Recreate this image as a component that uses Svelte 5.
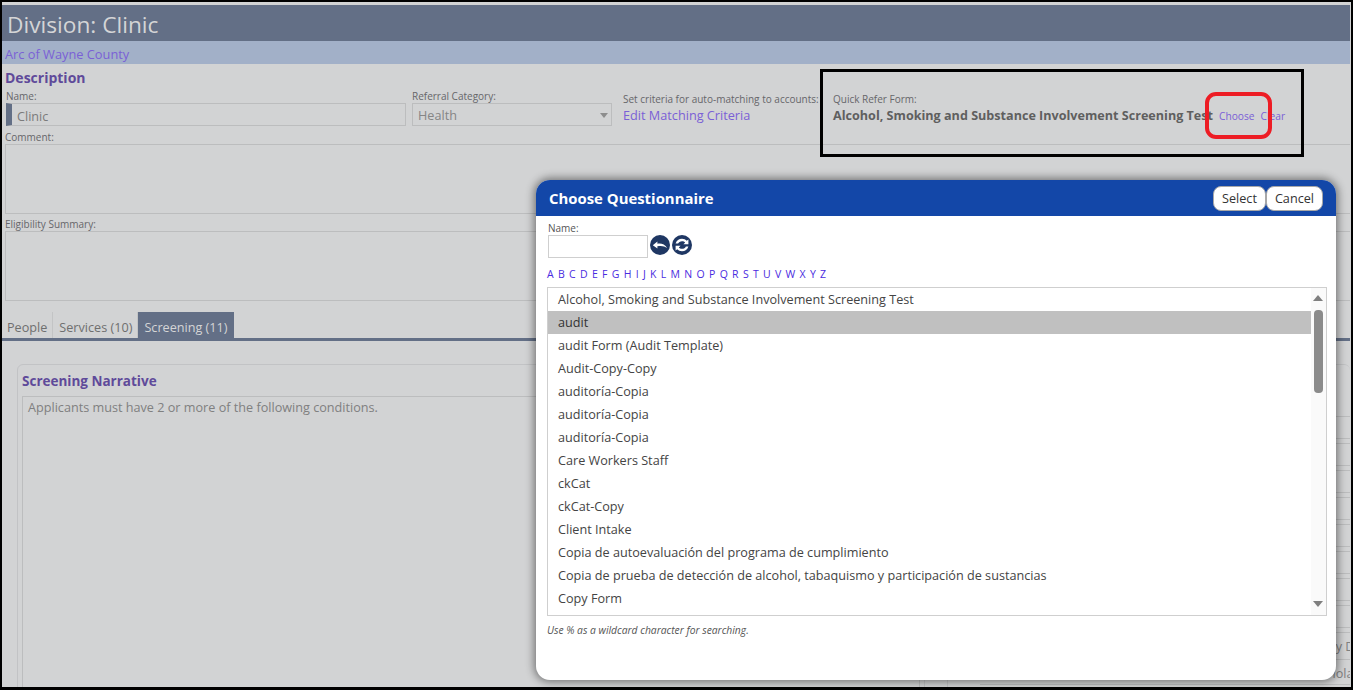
<script lang="ts">
  const letters = 'ABCDEFGHIJKLMNOPQRSTUVWXYZ'.split('');
  const forms = [
    'Alcohol, Smoking and Substance Involvement Screening Test',
    'audit',
    'audit Form (Audit Template)',
    'Audit-Copy-Copy',
    'auditoría-Copia',
    'auditoría-Copia',
    'auditoría-Copia',
    'Care Workers Staff',
    'ckCat',
    'ckCat-Copy',
    'Client Intake',
    'Copia de autoevaluación del programa de cumplimiento',
    'Copia de prueba de detección de alcohol, tabaquismo y participación de sustancias',
    'Copy Form'
  ];
  let selected = $state(1);
  const sideRows = [0, 1, 2, 3, 4, 5, 6, 7];
</script>

<div class="page">
  <header class="title">Division: Clinic</header>
  <div class="subbar"><a href="#top">Arc of Wayne County</a></div>

  <section class="description">
    <h2>Description</h2>
    <div class="top-row">
      <div class="field name">
        <label for="name">Name:</label>
        <div class="required"><input id="name" value="Clinic" /></div>
      </div>
      <div class="field category">
        <label for="cat">Referral Category:</label>
        <div class="select" id="cat">Health<span class="caret"></span></div>
      </div>
      <div class="field criteria">
        <span class="lab">Set criteria for auto-matching to accounts:</span>
        <a href="#top">Edit Matching Criteria</a>
      </div>
      <div class="field quick">
        <span class="lab">Quick Refer Form:</span>
        <div class="quick-line">
          <strong>Alcohol, Smoking and Substance Involvement Screening Test</strong>
          <a href="#top">Choose</a>
          <a href="#top">Clear</a>
        </div>
      </div>
    </div>
    <div class="lab comment-label">Comment:</div>
    <div class="area"></div>
    <div class="lab elig-label">Eligibility Summary:</div>
    <div class="area"></div>
  </section>

  <nav class="tabs">
    <span class="tab">People</span>
    <span class="tab">Services (10)</span>
    <span class="tab active">Screening (11)</span>
  </nav>

  <div class="panels">
    <section class="card narrative">
      <h3>Screening Narrative</h3>
      <div class="narrative-text">Applicants must have 2 or more of the following conditions.</div>
    </section>
    <section class="card side">
      {#each sideRows as r}
        <div class="side-row"></div>
      {/each}
      <div class="side-text one">Family Dependency</div>
      <div class="side-text two">Violation</div>
    </section>
  </div>
</div>

<div class="modal" role="dialog" aria-label="Choose Questionnaire">
  <div class="modal-head">
    <h4>Choose Questionnaire</h4>
    <div class="actions">
      <button>Select</button>
      <button>Cancel</button>
    </div>
  </div>
  <div class="modal-body">
    <label class="search-label" for="search">Name:</label>
    <div class="search">
      <input id="search" />
      <svg class="icon" viewBox="0 0 20 20" aria-label="Undo">
        <circle cx="10" cy="10" r="10" fill="#1f3763" />
        <path d="M2.8 10.2 7.4 6.4v2.3c3.8-.6 7.4.3 9.8 4.4-2.6-2-5.8-2.6-9.8-1.8v2.3z" fill="#fff" />
      </svg>
      <svg class="icon" viewBox="0 0 20 20" aria-label="Refresh">
        <circle cx="10" cy="10" r="10" fill="#1f3763" />
        <path d="M3.6 8.6C4.4 5.6 7 3.8 10 3.8c1.9 0 3.6.8 4.8 2l1.6-1.4v4.8h-5l1.8-1.7c-.7-.8-1.9-1.3-3.2-1.3-1.8 0-3.3 1-3.9 2.4zM16.4 11.4c-.8 3-3.4 4.8-6.4 4.8-1.9 0-3.6-.8-4.8-2l-1.6 1.4v-4.8h5l-1.8 1.7c.7.8 1.9 1.3 3.2 1.3 1.8 0 3.3-1 3.9-2.4z" fill="#fff" />
      </svg>
    </div>
    <div class="alpha">
      {#each letters as l}
        <a href="#top">{l}</a>
      {/each}
    </div>
    <div class="list">
      <div class="items">
        {#each forms as f, i}
          <button class="item" class:sel={i === selected} onclick={() => (selected = i)}>{f}</button>
        {/each}
      </div>
      <div class="scroll">
        <span class="arrow up"></span>
        <span class="thumb"></span>
        <span class="arrow down"></span>
      </div>
    </div>
    <p class="hint">Use % as a wildcard character for searching.</p>
  </div>
</div>

<!-- annotations drawn on top of the screenshot -->
<div class="mark-black"></div>
<div class="mark-red"></div>
<div class="frame"></div>

<style>
  :global(html), :global(body) {
    margin: 0;
    height: 100%;
    overflow: hidden;
    background: #d2d3d4;
  }

  :global(#app) {
    font-family: "Open Sans", "Noto Sans", sans-serif;
    font-size: 12px;
    color: #6b6b6b;
  }

  .page {
    box-sizing: border-box;
    height: 690px;
    padding: 5px 3px 0 2px;
    background: #d2d3d4;
    overflow: hidden;
  }

  a {
    color: #7a60d6;
    text-decoration: none;
  }

  .title {
    height: 36px;
    line-height: 40px;
    padding-left: 5px;
    background: #636f86;
    color: #d4d5d6;
    font-size: 22.7px;
  }

  .subbar {
    height: 23px;
    line-height: 27px;
    padding-left: 3px;
    background: #a2b0c8;
    font-size: 12.8px;
  }

  .description {
    padding: 0 0 0 3px;
  }

  h2 {
    margin: 0;
    height: 26px;
    line-height: 28px;
    color: #5f4a9a;
    font-size: 14px;
    font-weight: 700;
  }

  .top-row {
    display: flex;
    height: 41px;
  }

  .field {
    display: flex;
    flex-direction: column;
  }

  label, .lab {
    font-size: 10px;
    line-height: 13px;
    color: #66666a;
  }

  .name {
    width: 400px;
    margin-left: 1px;
  }

  .required {
    border: 1px solid #bcbdbe;
    border-left: 6px solid #636f86;
    height: 21px;
  }

  .required input {
    width: 100%;
    box-sizing: border-box;
    height: 21px;
    border: 0;
    padding: 2px 0 0 5px;
    background: transparent;
    font: inherit;
    font-size: 12.65px;
    color: #7b7b7b;
    outline: none;
  }

  .category {
    width: 200px;
    margin-left: 6px;
  }

  .select {
    position: relative;
    box-sizing: border-box;
    height: 23px;
    line-height: 23px;
    padding-left: 5px;
    border: 1px solid #bcbdbe;
    font-size: 12.65px;
    color: #858585;
  }

  .caret {
    position: absolute;
    right: 3px;
    top: 9px;
    border: 4px solid transparent;
    border-top: 5px solid #8d8d8d;
    border-bottom: 0;
  }

  .criteria {
    width: 198px;
    margin-left: 11px;
    padding-top: 3px;
    white-space: nowrap;
  }

  .criteria a {
    font-size: 12.7px;
    line-height: 18px;
  }

  .quick {
    margin-left: 12px;
    padding-top: 3px;
    white-space: nowrap;
  }

  .quick-line {
    display: flex;
    align-items: center;
    height: 18px;
    gap: 6px;
  }

  .quick-line strong {
    font-size: 12.6px;
    color: #5f5f5f;
  }

  .quick-line a {
    font-size: 10.2px;
    padding-top: 1px;
  }

  .comment-label {
    height: 13px;
    border-bottom: 1px solid #bcbdbe;
  }

  .area {
    box-sizing: border-box;
    height: 69px;
    border: 1px solid #bcbdbe;
    border-top: 0;
    border-right: 0;
  }

  .elig-label {
    height: 17px;
    line-height: 20px;
    border-bottom: 1px solid #bcbdbe;
  }

  .tabs {
    display: flex;
    height: 26px;
    margin-top: 11px;
    border-bottom: 3px solid #636f86;
  }

  .tab {
    padding: 0 6px;
    line-height: 31px;
    font-size: 12.65px;
    color: #6f6f6f;
    background: #d2d3d4;
    box-shadow: inset -1px 0 0 #c3c4c5;
  }

  .tab:first-child {
    padding-left: 5px;
  }

  .tab.active {
    background: #636f86;
    color: #d4d5d6;
    box-shadow: none;
  }

  .panels {
    display: flex;
    gap: 22px;
    padding: 23px 0 0 15px;
  }

  .card {
    box-sizing: border-box;
    height: 340px;
    border: 1px solid #c2c3c5;
    border-radius: 6px;
  }

  .narrative {
    flex: none;
    width: 908px;
    padding: 0 4px 0 4px;
  }

  h3 {
    margin: 0;
    height: 31px;
    line-height: 33px;
    color: #5f4a9a;
    font-size: 13.5px;
    font-weight: 700;
  }

  .narrative-text {
    height: 300px;
    padding: 1px 5px;
    border: 1px solid #bcbdbe;
    font-size: 12.65px;
    color: #808080;
  }

  .side {
    flex: 1;
    min-width: 0;
    padding-top: 51px;
    border-right: 0;
    overflow: hidden;
  }

  .side-row {
    box-sizing: border-box;
    height: 23px;
    margin: 0 0 4px 32px;
    border: solid #bcbdbe;
    border-width: 1px 0;
  }

  .side-text {
    box-sizing: border-box;
    margin-left: 32px;
    font-size: 12.65px;
    color: #808080;
    white-space: nowrap;
    border-bottom: 1px solid #bcbdbe;
  }

  .side-text.one {
    height: 28px;
    line-height: 26px;
    padding-left: 324px;
    border-top: 1px solid #bcbdbe;
  }

  .side-text.two {
    height: 25px;
    line-height: 26px;
    padding-left: 345px;
  }

  .modal {
    position: absolute;
    left: 536px;
    top: 180px;
    width: 800px;
    height: 500px;
    border-radius: 14px;
    background: #fff;
    overflow: hidden;
    box-shadow: 0 0 8px 2px rgba(0, 0, 0, 0.45);
  }

  .modal-head {
    display: flex;
    align-items: center;
    justify-content: space-between;
    height: 36px;
    padding: 0 13px;
    background: #1347a8;
  }

  h4 {
    margin: 0;
    color: #fff;
    font-size: 14.9px;
    font-weight: 700;
  }

  .actions {
    display: flex;
  }

  .actions button {
    height: 25px;
    padding: 0 8px;
    border: 1px solid #a8a8a8;
    border-radius: 8px;
    background: #fff;
    font: inherit;
    font-size: 12.65px;
    color: #333;
  }

  .modal-body {
    padding: 6px 9px 0 11px;
  }

  .search-label {
    display: block;
    font-size: 10px;
    line-height: 13px;
    margin-left: 1px;
    color: #555;
  }

  .search {
    display: flex;
    align-items: flex-start;
    gap: 2px;
    height: 23px;
    margin-left: 1px;
  }

  .search input {
    box-sizing: border-box;
    width: 100px;
    height: 23px;
    margin: 0;
    border: 1px solid #cfcfcf;
    padding: 0 4px;
  }

  .icon {
    width: 20px;
    height: 20px;
  }

  .alpha {
    display: flex;
    gap: 4.3px;
    height: 16px;
    margin-top: 9px;
    font-size: 10.5px;
    line-height: 14px;
  }

  .alpha a {
    color: #4a2be0;
  }

  .list {
    display: flex;
    box-sizing: border-box;
    height: 329px;
    margin-top: 4px;
    border: 1px solid #cfcfcf;
    overflow: hidden;
  }

  .items {
    flex: 1;
    display: flex;
    flex-direction: column;
  }

  .item {
    flex: none;
    height: 23px;
    padding: 0 0 2px 10px;
    border: 0;
    background: #fff;
    font: inherit;
    font-size: 12.65px;
    color: #444;
    text-align: left;
    white-space: nowrap;
  }

  .item.sel {
    background: #c0c0c0;
    color: #333;
  }

  .scroll {
    position: relative;
    width: 15px;
    background: #fafafa;
  }

  .arrow {
    position: absolute;
    left: 2px;
    border: 5px solid transparent;
  }

  .arrow.up {
    top: 7px;
    border-top: 0;
    border-bottom: 6px solid #7f7f7f;
  }

  .arrow.down {
    bottom: 8px;
    border-bottom: 0;
    border-top: 6px solid #7f7f7f;
  }

  .thumb {
    position: absolute;
    left: 3px;
    top: 22px;
    width: 9px;
    height: 83px;
    border-radius: 4px;
    background: #8b8b8b;
  }

  .hint {
    margin: 7px 0 0;
    font-size: 10.3px;
    font-style: italic;
    color: #555;
  }

  .mark-black {
    position: absolute;
    left: 820px;
    top: 69px;
    width: 478px;
    height: 82px;
    border: 3px solid #000;
  }

  .mark-red {
    position: absolute;
    left: 1205px;
    top: 92px;
    width: 59px;
    height: 39px;
    border: 4px solid #ed1c24;
    border-radius: 11px;
  }

  .frame {
    position: absolute;
    inset: 0;
    width: 1349px;
    height: 685px;
    border: solid #000;
    border-width: 2px 2px 3px 2px;
    pointer-events: none;
  }
</style>
